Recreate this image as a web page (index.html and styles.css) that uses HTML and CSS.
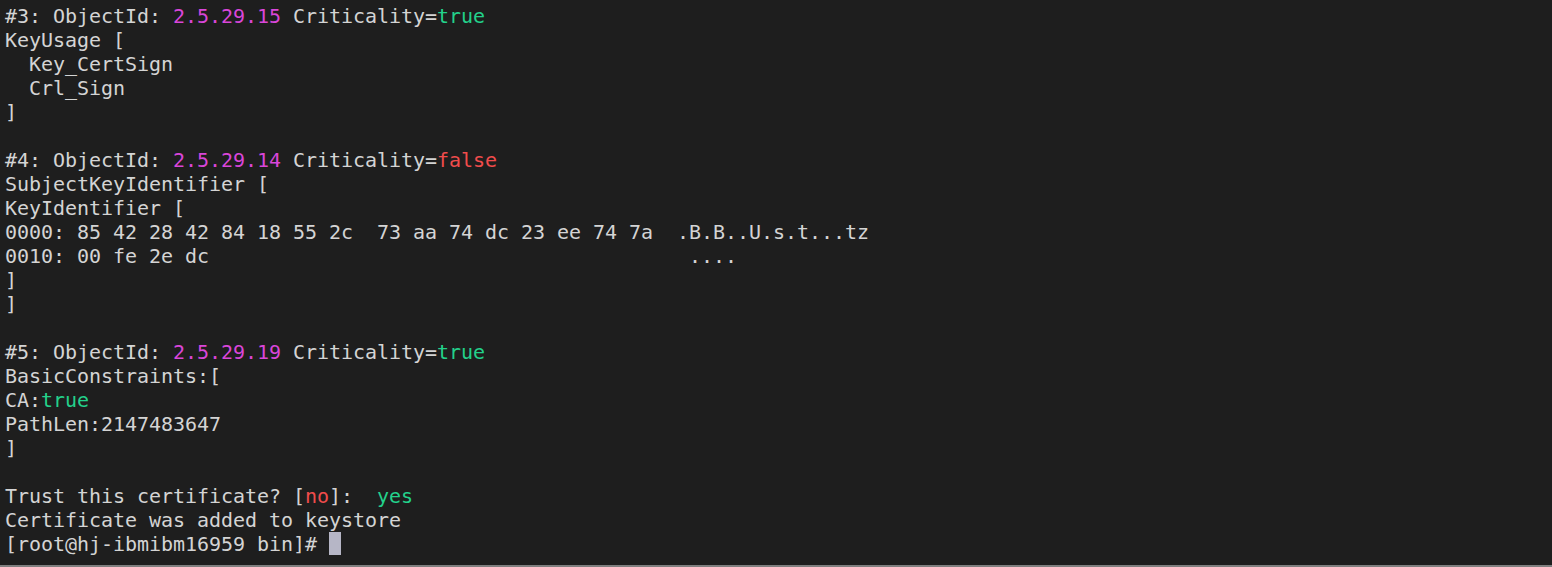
FILE: index.html
```html
<!DOCTYPE html>
<html lang="en">
<head>
<meta charset="utf-8">
<title>Terminal</title>
<link rel="stylesheet" href="styles.css">
</head>
<body>
<div class="terminal">
<pre class="output">#3: ObjectId: <span class="oid">2.5.29.15</span> Criticality=<span class="ok">true</span>
KeyUsage [
  Key_CertSign
  Crl_Sign
]

#4: ObjectId: <span class="oid">2.5.29.14</span> Criticality=<span class="bad">false</span>
SubjectKeyIdentifier [
KeyIdentifier [
0000: 85 42 28 42 84 18 55 2c  73 aa 74 dc 23 ee 74 7a  .B.B..U.s.t...tz
0010: 00 fe 2e dc                                        ....
]
]

#5: ObjectId: <span class="oid">2.5.29.19</span> Criticality=<span class="ok">true</span>
BasicConstraints:[
CA:<span class="ok">true</span>
PathLen:2147483647
]

Trust this certificate? [<span class="bad">no</span>]:  <span class="ok">yes</span>
Certificate was added to keystore
[root@hj-ibmibm16959 bin]# <span class="cursor"> </span></pre>
</div>
<div class="statusline"></div>
</body>
</html>
```

FILE: styles.css
```css
html, body {
  margin: 0;
  padding: 0;
  height: 100%;
}

body {
  background: #1e1e1e;
  display: flex;
  flex-direction: column;
  overflow: hidden;
}

.terminal {
  flex: 1;
  padding: 4px 0 0 5px;
  overflow: hidden;
}

.output {
  margin: 0;
  font-family: "DejaVu Sans Mono", "Liberation Mono", monospace;
  font-size: 20px;
  letter-spacing: -0.04px;
  line-height: 24px;
  color: #d4d4d4;
  white-space: pre;
}

.oid {
  color: #d946d9;
}

.ok {
  color: #23d18b;
}

.bad {
  color: #f14c4c;
}

.cursor {
  display: inline-block;
  width: 12px;
  height: 23px;
  vertical-align: top;
  background: #b6b6c6;
}

.statusline {
  height: 2px;
  background: #7f7f7f;
  flex: none;
}
```
